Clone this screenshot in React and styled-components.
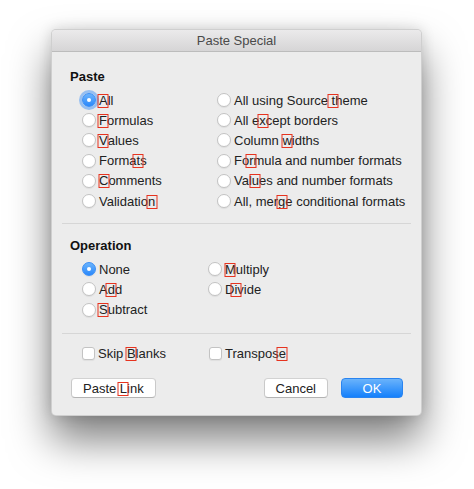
import React from 'react'
import styled, { createGlobalStyle, css } from 'styled-components'

const Global = createGlobalStyle`
  html, body {
    margin: 0;
    padding: 0;
    background: #ffffff;
  }
  body {
    font-family: "Liberation Sans", "Noto Sans", sans-serif;
    font-size: 13px;
    color: #1e1e1e;
    -webkit-font-smoothing: antialiased;
  }
`

const pasteLeft = [
  ['', 'A', 'll', true],
  ['', 'F', 'ormulas'],
  ['', 'V', 'alues'],
  ['Forma', 't', 's'],
  ['', 'C', 'omments'],
  ['Validatio', 'n', ''],
]

const pasteRight = [
  ['All using Source ', 't', 'heme'],
  ['All e', 'x', 'cept borders'],
  ['Column ', 'w', 'idths'],
  ['Fo', 'r', 'mula and number formats'],
  ['Val', 'u', 'es and number formats'],
  ['All, mer', 'g', 'e conditional formats'],
]

const Label = ({ parts }) => (
  <Text>
    {parts[0]}
    <Mark>{parts[1]}</Mark>
    {parts[2]}
  </Text>
)

const RadioRow = ({ parts, checked }) => (
  <Row>
    <Radio $checked={checked} $focus={parts && parts[3]} />
    <Label parts={parts} />
  </Row>
)

export default function App() {
  return (
    <>
      <Global />
      <Page>
        <Dialog>
          <TitleBar>Paste Special</TitleBar>

          <Section $top={17} $bottom={12}>
            <Heading>Paste</Heading>
            <Grid $right={135}>
              <Column>
                {pasteLeft.map((p, i) => (
                  <RadioRow key={i} parts={p} checked={i === 0} />
                ))}
              </Column>
              <Column>
                {pasteRight.map((p, i) => (
                  <RadioRow key={i} parts={p} />
                ))}
              </Column>
            </Grid>
          </Section>

          <Divider />

          <Section $top={14} $bottom={13}>
            <Heading>Operation</Heading>
            <Grid $right={126}>
              <Column>
                <RadioRow parts={['None', '', '']} checked />
                <RadioRow parts={['A', 'd', 'd']} />
                <RadioRow parts={['', 'S', 'ubtract']} />
              </Column>
              <Column>
                <RadioRow parts={['', 'M', 'ultiply']} />
                <RadioRow parts={['D', 'i', 'vide']} />
              </Column>
            </Grid>
          </Section>

          <Divider />

          <Section $top={10} $bottom={14}>
            <Grid $right={127}>
              <Row>
                <Check />
                <Label parts={['Skip ', 'B', 'lanks']} />
              </Row>
              <Row>
                <Check />
                <Label parts={['Transpos', 'e', '']} />
              </Row>
            </Grid>
          </Section>

          <Buttons>
            <Button>
              Paste <Mark>L</Mark>ink
            </Button>
            <Spacer />
            <Button>Cancel</Button>
            <Button $primary>OK</Button>
          </Buttons>
        </Dialog>
      </Page>
    </>
  )
}

const Page = styled.div`
  width: 474px;
  height: 489px;
  padding: 29px 0 0 51px;
  box-sizing: border-box;
`

const Dialog = styled.div`
  width: 371px;
  background: #ececec;
  border-radius: 5px;
  border: 1px solid rgba(0, 0, 0, 0.12);
  box-sizing: border-box;
  box-shadow: 0 24px 42px rgba(0, 0, 0, 0.5), 0 0 14px rgba(0, 0, 0, 0.14);
  overflow: hidden;
`

const TitleBar = styled.div`
  height: 21px;
  line-height: 21px;
  text-align: center;
  color: #4a4a4a;
  font-size: 13px;
  background: linear-gradient(#ebeaeb, #d6d5d6);
  border-bottom: 1px solid #bcbcbc;
`

const Section = styled.div`
  padding: ${p => p.$top}px 0 ${p => p.$bottom}px 18px;
`

const Heading = styled.div`
  font-weight: 700;
  line-height: 16px;
  margin-bottom: 5px;
  color: #111;
`

const Grid = styled.div`
  display: grid;
  grid-template-columns: ${p => p.$right}px 1fr;
  padding-left: 12px;
`

const Column = styled.div`
  display: flex;
  flex-direction: column;
`

const Row = styled.div`
  display: flex;
  align-items: center;
  height: 20.2px;
`

const Text = styled.span`
  white-space: nowrap;
  margin-left: 3px;
  color: #222;
`

const Mark = styled.span`
  position: relative;
  &::after {
    content: '';
    position: absolute;
    left: 50%;
    top: 1px;
    width: 9px;
    height: 12px;
    transform: translateX(-50%);
    border: 1.5px solid #e6331f;
  }
  &:empty::after {
    display: none;
  }
`

const Radio = styled.span`
  width: 14px;
  height: 14px;
  border-radius: 50%;
  box-sizing: border-box;
  flex: none;
  background: #fff;
  border: 1px solid #c3c3c3;
  box-shadow: 0 1px 1px rgba(0, 0, 0, 0.06);
  position: relative;
  ${p =>
    p.$checked &&
    css`
      border: 1px solid #3a8ef6;
      background: linear-gradient(#6cb4fc, #2a88fb);
      &::after {
        content: '';
        position: absolute;
        left: 4px;
        top: 4px;
        width: 4px;
        height: 4px;
        border-radius: 50%;
        background: #fff;
      }
    `}
  ${p =>
    p.$focus &&
    css`
      box-shadow: 0 0 0 3px rgba(80, 155, 245, 0.55);
    `}
`

const Check = styled.span`
  width: 13px;
  height: 13px;
  border-radius: 3px;
  box-sizing: border-box;
  flex: none;
  background: #fff;
  border: 1px solid #c3c3c3;
  box-shadow: 0 1px 1px rgba(0, 0, 0, 0.06);
`

const Buttons = styled.div`
  display: flex;
  align-items: center;
  gap: 13px;
  padding: 0 18px 17px 19px;
`

const Spacer = styled.div`
  flex: 1;
`

const Button = styled.div`
  height: 20px;
  line-height: 19px;
  box-sizing: border-box;
  padding: 0 11px;
  min-width: 62px;
  text-align: center;
  border-radius: 4px;
  background: #fff;
  border: 1px solid #c9c9c9;
  border-top-color: #d2d2d2;
  border-bottom-color: #b3b3b3;
  color: #222;
  ${p =>
    p.$primary &&
    css`
      background: linear-gradient(#6ab3fb, #1580fb);
      border-color: #2a84f0;
      color: #fff;
    `}
`

const Divider = styled.div`
  height: 1px;
  background: #d6d6d6;
  margin: 0 10px;
`
